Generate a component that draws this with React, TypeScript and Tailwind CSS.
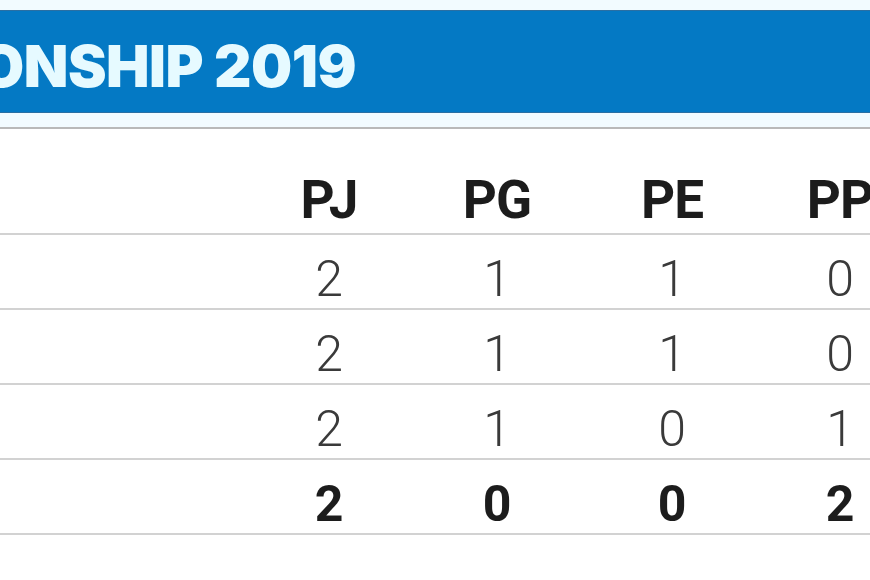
const columns = ["PJ", "PG", "PE", "PP"];

const rows = [
  { values: [2, 1, 1, 0], bold: false },
  { values: [2, 1, 1, 0], bold: false },
  { values: [2, 1, 0, 1], bold: false },
  { values: [2, 0, 0, 2], bold: true },
];

const grid = "grid grid-cols-[246px_166px_170px_180px_156px]";

export default function App() {
  return (
    <div className="w-[870px] h-[580px] overflow-hidden bg-white font-['Roboto',sans-serif]">
      <div className="h-[10px] bg-[#f2fbff]" />
      <div className="h-[103px] bg-[#0479c4] border-y border-[#2a6fa3] pt-[26px] overflow-hidden whitespace-nowrap">
        <div className="ml-[-261px] font-['Inter',sans-serif] text-[58px] leading-none font-black tracking-[-0.5px] text-[#e6faff]">
          CHAMPIONSHIP 2019
        </div>
      </div>
      <div className="h-[16px] bg-[#f2fbff] border-b-2 border-[#b9b9b9]" />

      <div className={`${grid} h-[106px] pt-[45px] border-b-2 border-[#d2d2d2]`}>
        <div />
        {columns.map((c) => (
          <div key={c} className="text-center text-[53px] leading-none font-bold tracking-[-1px] text-[#1c1c1c]">
            {c}
          </div>
        ))}
      </div>

      {rows.map((r, i) => (
        <div key={i} className={`${grid} h-[75px] pt-[19px] border-b-2 border-[#d2d2d2]`}>
          <div />
          {r.values.map((v, j) => (
            <div
              key={j}
              className={`text-center text-[50px] leading-none ${r.bold ? "font-bold text-[#1c1c1c]" : "font-light text-[#3a3a3a]"}`}
            >
              {v}
            </div>
          ))}
        </div>
      ))}
    </div>
  );
}
